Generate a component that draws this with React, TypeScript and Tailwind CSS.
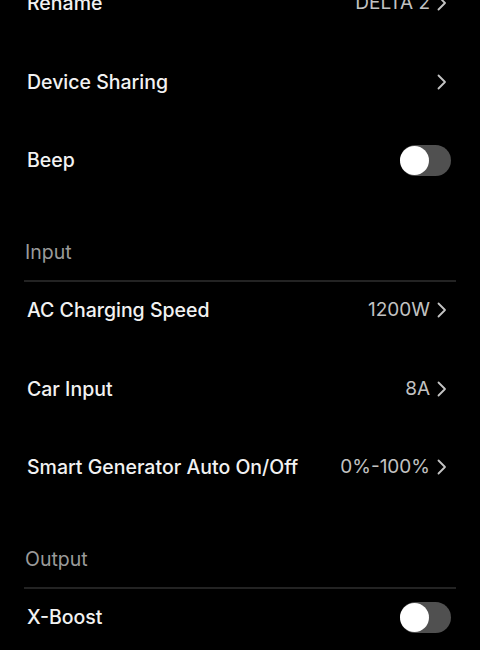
import React from "react";

const Chevron = () => (
  <svg width="10" height="16" viewBox="0 0 10 16" fill="none" className="shrink-0">
    <polyline points="1.5,1.5 8,8 1.5,14.5" stroke="#c4c4c4" strokeWidth="1.8" strokeLinecap="round" strokeLinejoin="round" />
  </svg>
);

const Toggle = () => (
  <div className="relative w-[51px] h-[31px] rounded-full bg-[#505050]">
    <div className="absolute left-0 top-[1px] w-[29px] h-[29px] rounded-full bg-white" />
  </div>
);

const Row = ({ label, value, toggle, chevron }: { label: string; value?: string; toggle?: boolean; chevron?: boolean }) => (
  <div className="h-[78.5px]">
    <div className="h-[56px] flex items-center justify-between">
      <span className="text-[19.5px] font-medium text-[#f2f2f2] leading-6 pl-[3px]">{label}</span>
      {toggle ? (
        <div className="pr-[5px]"><Toggle /></div>
      ) : (
        <div className="flex items-center gap-[7px] pr-[9px]">
          {value && <span className="text-[19px] text-[#c2c2c2] leading-6">{value}</span>}
          {chevron && <Chevron />}
        </div>
      )}
    </div>
  </div>
);

const Header = ({ title }: { title: string }) => (
  <div>
    <div className="pt-[29.5px] text-[19.5px] text-[#9a9a9a] leading-6 pl-[1px]">{title}</div>
    <div className="mt-[16px] h-[2px] bg-[#232323]" />
  </div>
);

export default function App() {
  return (
    <div className="w-[480px] h-[650px] overflow-hidden bg-black" style={{ fontFamily: "Inter, 'Noto Sans', sans-serif" }}>
      <div className="px-[24px] -mt-[25px]">
        <Row label="Rename" value="DELTA 2" chevron />
        <Row label="Device Sharing" chevron />
        <Row label="Beep" toggle />
        <Header title="Input" />
        <Row label="AC Charging Speed" value="1200W" chevron />
        <Row label="Car Input" value="8A" chevron />
        <Row label="Smart Generator Auto On/Off" value="0%-100%" chevron />
        <Header title="Output" />
        <Row label="X-Boost" toggle />
      </div>
    </div>
  );
}
